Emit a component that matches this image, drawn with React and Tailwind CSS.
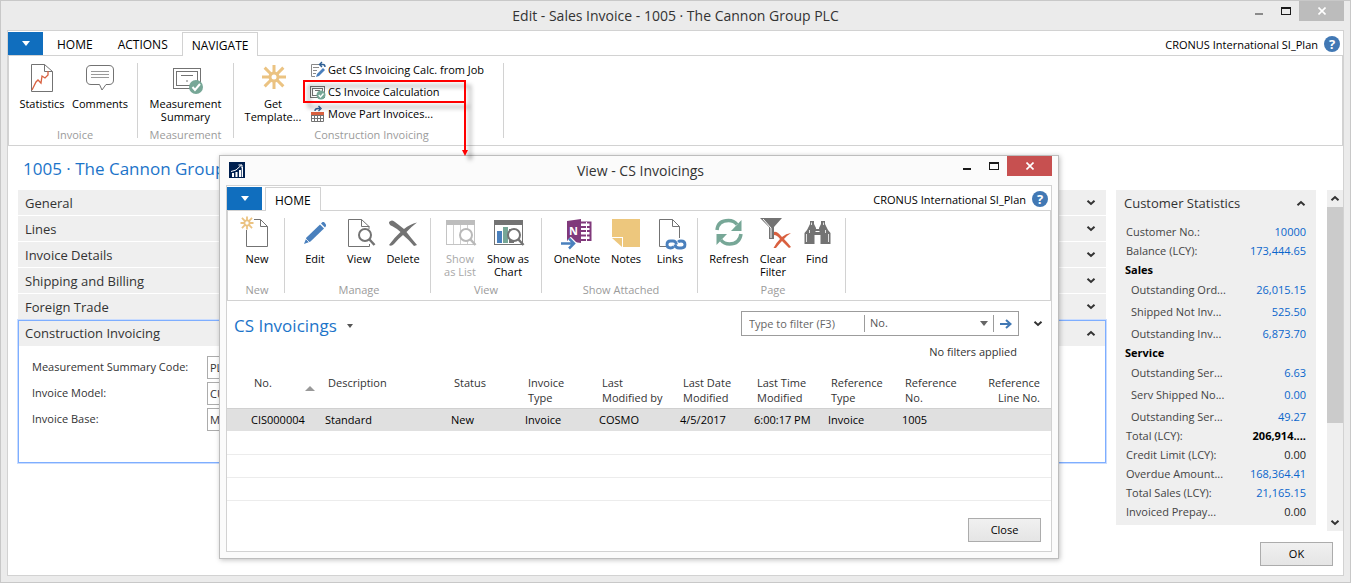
import React from "react";

/* ---------- icons ---------- */

function Icon({ children, size = 32 }) {
  return (
    <svg
      width={size}
      height={size}
      viewBox={`0 0 ${size} ${size}`}
      fill="none"
      overflow="visible"
      className="shrink-0"
      aria-hidden="true"
    >
      {children}
    </svg>
  );
}

const GRAY = "#737373";
const BLUE = "#4a80bd";
const GREEN = "#77a797";
const RED = "#d9603f";
const GOLD = "#ebc382";

function Page({ cut = false }) {
  return (
    <>
      <path
        d={cut ? "M26 12V9.5L18.5 2.5H5.5V29.5H26.5V27" : "M5.5 2.5H18.5L26.5 9.5V29.5H5.5Z"}
        stroke={GRAY}
        fill={cut ? "none" : "#fff"}
      />
      <path d="M18.5 2.5V9.5H26.5" stroke={GRAY} />
    </>
  );
}

function Lens({ color = GRAY, fill = "#fff" }) {
  return (
    <>
      <circle cx="22" cy="18" r="6" stroke={color} strokeWidth="2" fill={fill} />
      <path d="M26.5 22.5L31.5 28" stroke={color} strokeWidth="2.5" />
    </>
  );
}

function Burst({ x, y, inner, outer, width }) {
  const d = outer * 0.78;
  const i = inner * 0.75;
  return (
    <g transform={`translate(${x} ${y})`} stroke={GOLD} strokeWidth={width}>
      <circle r={inner} />
      <path
        d={`M0 ${-inner}V${-outer}M0 ${inner}V${outer}M${-inner} 0H${-outer}M${inner} 0H${outer}M${i} ${i}L${d} ${d}M${-i} ${i}L${-d} ${d}M${i} ${-i}L${d} ${-d}M${-i} ${-i}L${-d} ${-d}`}
      />
    </g>
  );
}

const StatisticsIcon = () => (
  <Icon>
    <Page />
    <path d="M6 28L10 20L12 18L15 21L16 14L19 16L22 13V9" stroke={RED} strokeWidth="1.3" />
  </Icon>
);

const CommentsIcon = () => (
  <Icon>
    <path
      d="M7 3.5H25Q29.5 3.5 29.5 8V18Q29.5 22.5 25 22.5H22L18 28L15.5 22.5H7Q2.5 22.5 2.5 18V8Q2.5 3.5 7 3.5Z"
      stroke={GRAY}
    />
    <path d="M7 9.5H25M7 12.5H25M7 15.5H25" stroke="#9a9a9a" />
  </Icon>
);

const MeasurementIcon = () => (
  <Icon>
    <rect x="3.5" y="6.5" width="27" height="20" stroke={GRAY} />
    <rect x="6.5" y="9.5" width="21" height="14" stroke={GRAY} />
    <path d="M11 13.5H23M16 19H18" stroke={GRAY} />
    <circle cx="26" cy="25" r="7" fill={GREEN} />
    <path d="M22.5 25L25 28L30 22" stroke="#fff" strokeWidth="2" />
  </Icon>
);

const TemplateIcon = () => (
  <Icon>
    <Burst x={17} y={15} inner={4} outer={12} width={3} />
  </Icon>
);

const NewIcon = () => (
  <Icon>
    <path d="M13 2.5H19.5L26.5 9.5V29.5H5.5V13" stroke={GRAY} />
    <path d="M19.5 2.5V9.5H26.5" stroke={GRAY} />
    <Burst x={6} y={6} inner={2.6} outer={6.5} width={1.8} />
  </Icon>
);

const EditIcon = () => (
  <Icon>
    <path d="M5 27L7.5 20.5L21 7.5L25 11.5L11.5 24.5Z" fill={BLUE} />
    <path d="M22 6.5L23.5 5H25L27 7.5V9L26 10.5Z" fill={BLUE} />
    <path d="M7 22L10 25" stroke="#fff" strokeWidth="0.8" />
  </Icon>
);

const ViewIcon = () => (
  <Icon>
    <Page cut />
    <Lens />
  </Icon>
);

const DeleteIcon = () => (
  <Icon>
    <path
      d="M2 5Q5 2 8 5Q12 8 17 12Q23 7 30 5.5Q24 10 19.5 15Q24 21 30 28L27 29Q21 22 16 18Q11 22 7 27Q4 30 2 28Q7 21 13.5 15Q9 11 5 9Q2 8 2 5Z"
      fill={GRAY}
    />
  </Icon>
);

const ListIcon = () => (
  <Icon>
    <rect x="2.5" y="3.5" width="28" height="24" stroke="#c4c4c4" />
    <rect x="2" y="3" width="29" height="5" fill="#bdbdbd" />
    <path d="M9.5 8V27M16.5 8V27M23.5 8V27" stroke="#d0d0d0" />
    <Lens color="#b9b9b9" />
  </Icon>
);

const ChartIcon = () => (
  <Icon>
    <rect x="2.5" y="3.5" width="28" height="24" stroke={GRAY} />
    <rect x="2" y="3" width="29" height="5" fill={GRAY} />
    <rect x="5" y="14" width="5" height="12" fill={BLUE} />
    <rect x="11" y="10" width="5" height="16" fill={GREEN} />
    <rect x="17" y="12" width="5" height="14" fill={GRAY} />
    <Lens />
  </Icon>
);

const OneNoteIcon = () => (
  <Icon>
    <path d="M20 5.5H29.5V23H20M20 10H29M20 14H29M20 18.5H29" stroke="#80397b" strokeWidth="2" />
    <path d="M25.5 5V24" stroke="#fff" strokeWidth="1" />
    <path d="M6 4L20 2V26L6 24Z" fill="#80397b" />
    <text x="8" y="18" fontFamily="Open Sans, sans-serif" fontWeight="700" fontSize="11" fill="#fff">
      N
    </text>
    <path d="M0 26.5H13M8 21.5L13 26.5L8 31.5" stroke="#fff" strokeWidth="5" />
    <path d="M0 26.5H13M8 21.5L13 26.5L8 31.5" stroke={BLUE} strokeWidth="2.5" />
  </Icon>
);

const NotesIcon = () => (
  <Icon>
    <path d="M2 2H30V30H13V20H2Z" fill="#edc77d" />
    <path d="M2 21H12V30Z" fill="#edc77d" />
  </Icon>
);

const LinksIcon = () => (
  <Icon>
    <path d="M12 29.5H5.5V2.5H18.5L25.5 9.5V21M18.5 2.5V9.5H25.5" stroke={GRAY} />
    <g stroke={BLUE} strokeWidth="2.8">
      <path d="M20 29.5Q18.5 31 16.5 31Q13 31 13 27.5Q13 24 16.5 24H19Q22 24 22.5 27.5" />
      <path d="M24 25Q25 24 27 24Q31 24 31 27.5Q31 31 27.5 31H25Q21.5 31 21 27.5" />
    </g>
  </Icon>
);

const RefreshIcon = () => (
  <Icon>
    <path d="M4 13Q5 3.5 15.5 3.5Q21 3.5 24 7.5" stroke={GREEN} strokeWidth="3.5" />
    <path d="M28.5 3V14H18Z" fill={GREEN} />
    <path d="M28 17Q26.5 27 16.5 27Q11 27 8 23" stroke={GREEN} strokeWidth="3.5" />
    <path d="M3.5 28V17H14Z" fill={GREEN} />
  </Icon>
);

const ClearFilterIcon = () => (
  <Icon>
    <path d="M3 1H25L17 10V22H12V10Z" fill={GRAY} />
    <path d="M6 2L14 11V21" stroke="#fff" />
    <path
      d="M17 15Q20 14 25 20Q29 16.5 34 16Q30 18.5 27 22Q30 25 34 30L32 31Q28 27 25 24Q22 27 19 31L16.5 31Q19 26 23 22Q20 18 17 18Z"
      fill={RED}
    />
  </Icon>
);

const FindIcon = () => (
  <Icon>
    <path
      d="M9 4H13V7L15 11V12H18V11L20 7V4H24V7L27 13L29.500 16V27H19.500V18H13.500V27H3.500V16L6 13L9 7Z"
      fill={GRAY}
    />
    <path d="M5.5 17V25M27.500 17V25M10.500 5.5V8M22.500 5.5V8M8.500 13V16M24.500 13V16" stroke="#fff" strokeWidth="0.8" />
    <path d="M14.500 14.500H18.500" stroke="#fff" />
  </Icon>
);

const JobCalcIcon = () => (
  <Icon size={16}>
    <path d="M9 2.5H1.5V14.5H5M3 5.5H9M3 8.5H7M3 11.5H6" stroke="#8a8a8a" />
    <path d="M6 15L7 12L13 6L15 8L9 14Z" fill={BLUE} />
    <path d="M10 2.5H13Q15 2.5 15 5M12 0L9.5 2.5L12 5" stroke="#2f6095" strokeWidth="1.4" />
  </Icon>
);

const CalculationIcon = () => (
  <Icon size={16}>
    <rect x="0.5" y="2.5" width="14" height="11" stroke={GRAY} />
    <rect x="2.5" y="4.5" width="10" height="7" stroke={GRAY} />
    <path d="M5 6.5H10" stroke={GRAY} />
    <circle cx="11" cy="11" r="4.5" fill={GREEN} />
    <path d="M8.7 11L10.5 13L13.5 9.5" stroke="#fff" strokeWidth="1.4" />
  </Icon>
);

const PartInvoicesIcon = () => (
  <Icon size={16}>
    <path d="M1.5 6V15.5H13.5V6M1.5 9.5H13.5M1.5 12.5H13.5M4.5 6V15M7.5 6V15M10.5 6V15" stroke={GRAY} />
    <rect x="1" y="6" width="13" height="3" fill={RED} />
    <path d="M5 5Q5 2.5 8 2.5H10M8.5 0L11 2.5L8.5 5" stroke="#2f6095" strokeWidth="1.4" />
  </Icon>
);

const LogoIcon = () => (
  <Icon size={16}>
    <rect width="16" height="16" fill="#00204f" />
    <path d="M3 15V11H5V15ZM6.5 15V10H8.5V15ZM10 15V8H12V15ZM12.7 15V5H14V15Z" fill="#fff" />
    <path d="M2 9.5L7 8L12.5 3M9.5 3H13V6" stroke="#fff" />
  </Icon>
);

function Chevron({ up = false }) {
  return (
    <svg width="10" height="7" viewBox="0 0 10 7" fill="none" className="shrink-0" aria-hidden="true">
      <path d={up ? "M1.5 5.2L5 2L8.5 5.2" : "M1.5 1.8L5 5L8.5 1.8"} stroke="#333" strokeWidth="2" />
    </svg>
  );
}

function Caret({ color }) {
  return (
    <svg width="8" height="5" viewBox="0 0 8 5" className="shrink-0" aria-hidden="true">
      <path d="M0 0H8L4 5Z" fill={color} />
    </svg>
  );
}

/* ---------- shared window parts ---------- */

function WindowButtons({ dialog = false }) {
  return (
    <div className="flex h-5 items-center">
      <button aria-label="Minimize" className="flex h-5 w-7 items-center justify-center">
        <span className={`mt-[6px] block h-0.5 w-2 ${dialog ? "bg-[#1a1a1a]" : "bg-[#8a8a8a]"}`} />
      </button>
      <button aria-label="Maximize" className="flex h-5 w-[26px] items-center justify-center">
        <span className="block h-2 w-[10px] border border-t-2 border-[#1a1a1a]" />
      </button>
      <button
        aria-label="Close window"
        className={`flex h-5 w-[45px] items-center justify-center ${dialog ? "bg-[#c75050]" : "bg-[#bcbcbc]"}`}
      >
        <svg width="8" height="8" viewBox="0 0 8 8" aria-hidden="true">
          <path d="M0.5 0.5L7.5 7.5M7.5 0.5L0.5 7.5" stroke="#fff" strokeWidth="1.6" />
        </svg>
      </button>
    </div>
  );
}

function TabBar({ tabs, active }) {
  return (
    <div className="flex h-[23px] items-stretch">
      <button aria-label="Application menu" className="flex w-[35px] items-center justify-center bg-[#106ebe]">
        <Caret color="#fff" />
      </button>
      <div role="tablist" className="ml-[3px] flex gap-[3px] text-[12px]">
        {tabs.map((t) => (
          <button
            key={t}
            role="tab"
            aria-selected={t === active}
            className={
              t === active
                ? "relative z-10 -mb-px border border-b-0 border-[#d2d2d2] bg-white px-[9px] pt-[3px]"
                : "px-[11px] pt-[3px]"
            }
          >
            {t}
          </button>
        ))}
      </div>
      <div className="ml-auto flex items-center gap-[6px] pr-[3px]">
        <span className="pt-1">CRONUS International SI_Plan</span>
        <button
          aria-label="Help"
          className="flex h-4 w-4 items-center justify-center rounded-full bg-[#4178b4] text-[13px] leading-4 font-bold text-white"
        >
          ?
        </button>
      </div>
    </div>
  );
}

function Group({ label, className = "", children }) {
  return (
    <section aria-label={label} className={`flex flex-col border-r border-[#d2d2d2] ${className}`}>
      <div className="flex min-h-0 flex-1">{children}</div>
      <div className="-mb-[5px] text-center leading-4 text-[#9b9b9b]">{label}</div>
    </section>
  );
}

function BigButton({ icon, label, width = "w-11", disabled = false }) {
  return (
    <button
      disabled={disabled}
      className={`-mt-px flex flex-col items-center gap-[3px] self-start text-center leading-[13px] ${width} ${disabled ? "text-[#a8a8a8]" : ""}`}
    >
      {icon}
      <span className="whitespace-pre">{label}</span>
    </button>
  );
}

function Ribbon({ children }) {
  return <div className="flex h-[91px] border border-[#d2d2d2] py-[7px]">{children}</div>;
}

/* ---------- main page ---------- */

function SmallButton({ icon, children }) {
  return (
    <button className="relative flex h-[22px] items-center gap-[2px] whitespace-nowrap">
      {icon}
      {children}
    </button>
  );
}

function Callout() {
  return (
    <svg
      width="175"
      height="90"
      viewBox="0 0 175 90"
      fill="none"
      aria-hidden="true"
      className="pointer-events-none absolute -top-px -left-[7px] z-20 drop-shadow-[5px_5px_2px_rgba(0,0,0,0.35)]"
    >
      <rect x="1" y="1" width="161" height="21" stroke="#f00" strokeWidth="2" />
      <path d="M162 22V72" stroke="#f00" strokeWidth="2" />
      <path d="M159 70H165L162 76Z" fill="#f00" />
    </svg>
  );
}

const fastTabs = ["General", "Lines", "Invoice Details", "Shipping and Billing", "Foreign Trade"];

const fields = [
  ["Measurement Summary Code:", "PL"],
  ["Invoice Model:", "CUM"],
  ["Invoice Base:", "MEAS"],
];

function FastTabHeader({ children, open = false }) {
  return (
    <button
      className={`flex h-[25px] w-full items-center justify-between bg-[#efefef] text-[13px] text-[#333] ${open ? "pr-[9px] pl-[6px]" : "pr-[10px] pl-[7px]"}`}
    >
      <span className={open ? "pt-px" : "pt-[2px]"}>{children}</span>
      <Chevron up={open} />
    </button>
  );
}

const stats = [
  { rows: [["Customer No.:", "10000"], ["Balance (LCY):", "173,444.65"]] },
  {
    title: "Sales",
    rows: [["Outstanding Ord...", "26,015.15"], ["Shipped Not Inv...", "525.50"], ["Outstanding Inv...", "6,873.70"]],
  },
  {
    title: "Service",
    rows: [["Outstanding Ser...", "6.63"], ["Serv Shipped No...", "0.00"], ["Outstanding Ser...", "49.27"]],
  },
  {
    rows: [
      ["Total (LCY):", "206,914....", "bold"],
      ["Credit Limit (LCY):", "0.00", "plain"],
      ["Overdue Amount...", "168,364.41"],
      ["Total Sales (LCY):", "21,165.15"],
      ["Invoiced Prepay...", "0.00", "plain"],
    ],
  },
];

function StatValue({ kind, children }) {
  if (kind === "bold") return <span className="font-bold text-black">{children}</span>;
  if (kind === "plain") return <span className="text-[#222]">{children}</span>;
  return (
    <a href="#detail" className="text-[#0a66cc]">
      {children}
    </a>
  );
}

function FactBox() {
  return (
    <aside className="w-[200px] shrink-0 bg-[#efefef] pb-1">
      <button className="mb-[6px] flex h-[26px] w-full items-center justify-between pr-[10px] pl-2 text-[13px] text-[#333]">
        <span className="pt-[2px]">Customer Statistics</span>
        <Chevron up />
      </button>
      {stats.map((s, i) => (
        <div key={i}>
          {s.title && <h3 className="pl-[9px] leading-[19px] font-bold">{s.title}</h3>}
          <div className={s.title ? "flex flex-col gap-[3px] pt-px" : ""}>
            {s.rows.map(([k, v, kind], j) => (
              <div
                key={j}
                className={`flex justify-between pr-[10px] leading-[19px] text-[#444] ${s.title ? "pl-[15px]" : "pl-[10px]"}`}
              >
                <span>{k}</span>
                <StatValue kind={kind}>{v}</StatValue>
              </div>
            ))}
          </div>
        </div>
      ))}
    </aside>
  );
}

function ScrollBar() {
  return (
    <div className="flex w-4 flex-col bg-[#efefef]">
      <button aria-label="Scroll up" className="flex h-[17px] items-center justify-center">
        <Chevron up />
      </button>
      <div className="h-[216px] bg-[#cbcbcb]" />
      <button aria-label="Scroll down" className="mt-auto flex h-[17px] items-center justify-center">
        <Chevron />
      </button>
    </div>
  );
}

const pushButton = "h-6 w-[73px] border border-[#acacac] bg-linear-to-b from-[#f0f0f0] to-[#e5e5e5] text-black";

/* ---------- dialog ---------- */

const columns = [
  "No.",
  "Description",
  "Status",
  "Invoice\nType",
  "Last\nModified by",
  "Last Date\nModified",
  "Last Time\nModified",
  "Reference\nType",
  "Reference\nNo.",
  "Reference\nLine No.",
];

const record = ["CIS000004", "Standard", "New", "Invoice", "COSMO", "4/5/2017", "6:00:17 PM", "Invoice", "1005", ""];

function InvoicingTable() {
  return (
    <table className="mt-[15px] w-full table-fixed border-collapse text-left whitespace-nowrap">
      <colgroup>
        <col className="w-[94px]" />
        <col className="w-[126px]" />
        <col className="w-[74px]" />
        <col className="w-[74px]" />
        <col className="w-[81px]" />
        <col className="w-[74px]" />
        <col className="w-[74px]" />
        <col className="w-[74px]" />
        <col className="w-[74px]" />
        <col />
      </colgroup>
      <thead>
        <tr className="h-[33px] border-b border-[#d0d0d0] align-top leading-[15px] text-[#333]">
          {columns.map((label, i) => (
            <th
              key={i}
              scope="col"
              className={
                i === 0
                  ? "relative pl-[27px] font-normal"
                  : i === 9
                    ? "pr-[11px] text-right font-normal whitespace-pre"
                    : "pl-[7px] font-normal whitespace-pre"
              }
            >
              {label}
              {i === 0 && (
                <svg width="10" height="5" viewBox="0 0 10 5" className="absolute top-[11px] right-[6px]" aria-hidden="true">
                  <path d="M0 5L5 0L10 5Z" fill="#999" />
                </svg>
              )}
            </th>
          ))}
        </tr>
      </thead>
      <tbody>
        <tr className="h-[23px] bg-[#e0e0e0] text-black">
          {record.map((v, i) => (
            <td key={i} className={i === 0 ? "pl-6" : "pl-1"}>
              {v}
            </td>
          ))}
        </tr>
        {[1, 2, 3].map((n) => (
          <tr key={n} className="h-[23px] border-b border-[#ececec]">
            <td colSpan={10} />
          </tr>
        ))}
      </tbody>
    </table>
  );
}

function Dialog() {
  return (
    <div
      role="dialog"
      aria-label="View - CS Invoicings"
      className="absolute top-[154px] left-[218px] z-10 flex h-[404px] w-[840px] flex-col border border-[#bdbdbd] bg-[#fbfbfb] px-[6px] pb-[6px] shadow-[1px_1px_5px_rgba(0,0,0,0.25)]"
    >
      <div className="flex h-[29px] shrink-0 items-start">
        <div className="flex-1 pt-[6px] pl-[3px]">
          <LogoIcon />
        </div>
        <h2 className="text-[14px] leading-[29px] text-[#333]">View - CS Invoicings</h2>
        <div className="flex flex-1 justify-end">
          <WindowButtons dialog />
        </div>
      </div>
      <div className="flex flex-1 flex-col border border-[#d2d2d2] bg-white pt-px">
        <TabBar tabs={["HOME"]} active="HOME" />
        <Ribbon>
          <Group label="New" className="w-[57px] items-center pl-[2px]">
            <BigButton icon={<NewIcon />} label="New" />
          </Group>
          <Group label="Manage" className="pr-[5px] pl-2">
            <BigButton icon={<EditIcon />} label="Edit" />
            <BigButton icon={<ViewIcon />} label="View" />
            <BigButton icon={<DeleteIcon />} label="Delete" />
          </Group>
          <Group label="View" className="pr-[7px] pl-[7px]">
            <BigButton icon={<ListIcon />} label={"Show\nas List"} disabled />
            <BigButton icon={<ChartIcon />} label={"Show as\nChart"} width="w-[52px]" />
          </Group>
          <Group label="Show Attached" className="pr-[5px] pl-2">
            <BigButton icon={<OneNoteIcon />} label="OneNote" width="w-[54px]" />
            <BigButton icon={<NotesIcon />} label="Notes" />
            <BigButton icon={<LinksIcon />} label="Links" />
          </Group>
          <Group label="Page" className="pr-[6px] pl-[9px]">
            <BigButton icon={<RefreshIcon />} label="Refresh" />
            <BigButton icon={<ClearFilterIcon />} label={"Clear\nFilter"} />
            <BigButton icon={<FindIcon />} label="Find" />
          </Group>
        </Ribbon>
        <div className="flex items-start pt-[10px] pr-[8px] pl-[7px]">
          <button className="flex items-center gap-[10px] text-[17px] leading-[30px] text-[#1c74c9]">
            CS Invoicings
            <svg width="6" height="4" viewBox="0 0 6 4" aria-hidden="true">
              <path d="M0 0H6L3 4Z" fill="#555" />
            </svg>
          </button>
          <form className="ml-auto flex h-[25px] w-[278px] items-center border border-[#9c9c9c]">
            <input
              aria-label="Type to filter"
              placeholder="Type to filter (F3)"
              className="h-full w-[122px] px-[7px] text-[11px] outline-none placeholder:text-[#666]"
            />
            <div className="flex h-[17px] flex-1 items-center border-x border-[#9c9c9c] pr-[5px] pl-[5px]">
              <select aria-label="Filter field" className="w-full appearance-none bg-transparent text-[11px] text-[#555] outline-none">
                <option>No.</option>
              </select>
              <Caret color="#666" />
            </div>
            <button type="button" aria-label="Apply filter" className="flex w-[24px] justify-center">
              <svg width="12" height="10" viewBox="0 0 12 10" fill="none" aria-hidden="true">
                <path d="M0 5H10M6 1L10.500 5L6 9" stroke="#4178b4" strokeWidth="2" />
              </svg>
            </button>
          </form>
          <button aria-label="Expand filter pane" className="ml-[14px] flex h-[25px] items-center">
            <Chevron />
          </button>
        </div>
        <p className="mt-[3px] pr-[34px] text-right leading-4 text-[#333]">No filters applied</p>
        <InvoicingTable />
        <div className="mt-auto flex justify-end pr-[10px] pb-[9px]">
          <button className={pushButton}>Close</button>
        </div>
      </div>
    </div>
  );
}

export default function App() {
  return (
    <div className="relative flex min-h-screen flex-col border border-[#c8c8c8] bg-[#ebebeb] px-[6px] pb-[6px] font-['Open_Sans','Noto_Sans',sans-serif] text-[11px] text-black">
      <header className="flex h-[29px] shrink-0 items-start">
        <div className="flex-1" />
        <h1 className="text-[14px] leading-[29px] text-[#333]">Edit - Sales Invoice - 1005 · The Cannon Group PLC</h1>
        <div className="flex flex-1 justify-end">
          <WindowButtons />
        </div>
      </header>

      <main className="flex flex-1 flex-col border border-[#d2d2d2] bg-white pt-px">
        <TabBar tabs={["HOME", "ACTIONS", "NAVIGATE"]} active="NAVIGATE" />
        <Ribbon>
          <Group label="Invoice" className="w-[129px] pl-[4px]">
            <BigButton icon={<StatisticsIcon />} label="Statistics" width="w-[58px]" />
            <BigButton icon={<CommentsIcon />} label="Comments" width="w-[58px]" />
          </Group>
          <Group label="Measurement" className="px-[7px]">
            <BigButton icon={<MeasurementIcon />} label={"Measurement\nSummary"} width="w-[81px]" />
          </Group>
          <Group label="Construction Invoicing" className="w-[270px] pl-[6px]">
            <BigButton icon={<TemplateIcon />} label={"Get\nTemplate..."} width="w-[66px]" />
            <div className="-mt-1 ml-1 flex flex-col items-start">
              <SmallButton icon={<JobCalcIcon />}>Get CS Invoicing Calc. from Job</SmallButton>
              <SmallButton icon={<CalculationIcon />}>
                CS Invoice Calculation
                <Callout />
              </SmallButton>
              <SmallButton icon={<PartInvoicesIcon />}>Move Part Invoices...</SmallButton>
            </div>
          </Group>
        </Ribbon>

        <h2 className="px-[15px] pt-[10px] text-[17px] leading-[26px] text-[#1c74c9]">1005 · The Cannon Group PLC</h2>

        <div className="mt-2 flex pl-[10px]">
          <div className="flex min-w-0 flex-1 flex-col gap-px self-start">
            {fastTabs.map((t) => (
              <FastTabHeader key={t}>{t}</FastTabHeader>
            ))}
            <section className="h-[143px] border border-[#7eaeff] outline outline-[#c9dcff]">
              <FastTabHeader open>Construction Invoicing</FastTabHeader>
              <div className="flex flex-col gap-[2px] px-[13px] pt-[9px] text-[#333]">
                {fields.map(([label, value], i) => (
                  <div key={label} className="flex h-6 items-center">
                    <label htmlFor={`field-${i}`} className="w-[175px]">
                      {label}
                    </label>
                    <input
                      id={`field-${i}`}
                      defaultValue={value}
                      className="h-[23px] w-[160px] border border-[#acacac] px-[2px] outline-none"
                    />
                  </div>
                ))}
              </div>
            </section>
          </div>
          <div className="ml-[10px] flex items-start">
            <FactBox />
          </div>
          <div className="ml-[11px] flex h-[341px]">
            <ScrollBar />
          </div>
        </div>

        <div className="mt-auto flex justify-end pr-[10px] pb-[9px]">
          <button className={pushButton}>OK</button>
        </div>
      </main>

      <Dialog />
    </div>
  );
}
